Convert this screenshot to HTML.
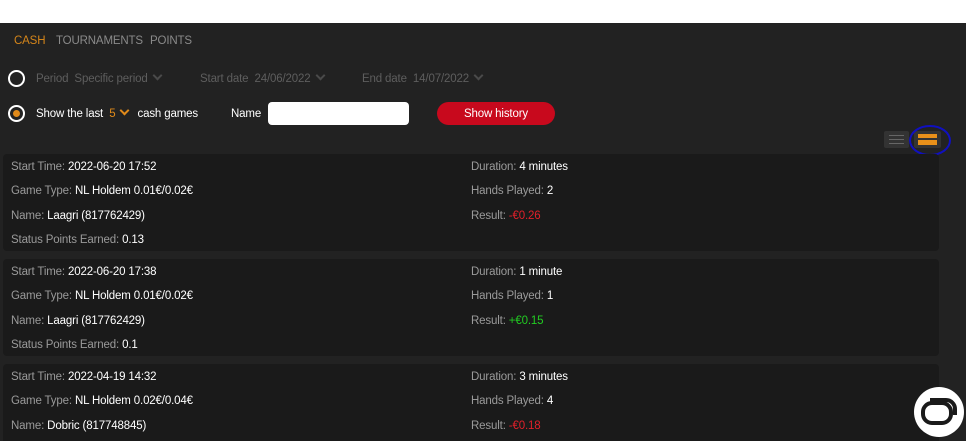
<!DOCTYPE html>
<html><head><meta charset="utf-8"><style>
*{margin:0;padding:0;box-sizing:border-box}
html,body{width:975px;height:441px;overflow:hidden}
body{background:#fff;position:relative;font-family:"Liberation Sans",sans-serif;font-size:11.5px;letter-spacing:-0.15px}
#app{position:absolute;left:0;top:23px;width:966px;height:418px;background:#222;overflow:hidden}
.a{position:absolute;white-space:nowrap}
.dim{color:#5e5e5e}
.w{color:#fff}
.g{color:#9a9a9a}
.radio{position:absolute;width:17px;height:17px;border:2px solid #fff;border-radius:50%}
.chev{display:inline-block;width:7px;height:7px;border-right:2px solid #4a4a4a;border-bottom:2px solid #4a4a4a;transform:rotate(45deg);margin-left:6px;position:relative;top:-3px}
.card{position:absolute;left:3px;width:936px;height:97px;background:#1a1a1a;border-radius:4px}
.card .a{color:#9a9a9a}
.card b{font-weight:normal;color:#fff}
</style></head><body>
<div id="app">
<div class="a" style="left:14px;top:12px;color:#d4851a">CASH</div>
<div class="a g" style="left:56px;top:12px;color:#8a8a8a">TOURNAMENTS</div>
<div class="a g" style="left:150px;top:12px;color:#8a8a8a">POINTS</div>

<div class="radio" style="left:8px;top:47px"></div>
<div class="a dim" style="left:36px;top:50px">Period&nbsp; Specific period<span class="chev"></span></div>
<div class="a dim" style="left:200px;top:50px">Start date&nbsp; 24/06/2022<span class="chev"></span></div>
<div class="a dim" style="left:362px;top:50px">End date&nbsp; 14/07/2022<span class="chev"></span></div>

<div class="radio" style="left:8px;top:82px"></div>
<div style="position:absolute;left:13px;top:87px;width:7px;height:7px;border-radius:50%;background:#e08a1a"></div>
<div class="a w" style="left:36px;top:85px">Show the last&nbsp; <span style="color:#e08a1a">5</span><span class="chev" style="border-color:#e08a1a;margin-right:6px"></span> cash games</div>
<div class="a w" style="left:231px;top:85px">Name</div>
<div style="position:absolute;left:268px;top:79px;width:141px;height:23px;background:#fff;border-radius:4px"></div>
<div style="position:absolute;left:437px;top:79px;width:118px;height:23px;background:#c8091d;border-radius:12px;color:#fff;text-align:center;line-height:24px">Show history</div>

<div style="position:absolute;left:884px;top:108px;width:25px;height:17px;background:#333;border-radius:2px"></div>
<div style="position:absolute;left:889px;top:112px;width:15px;height:9px;border-top:1px solid #666;border-bottom:1px solid #666"><div style="margin-top:3px;height:1px;background:#666"></div></div>
<div style="position:absolute;left:914px;top:108px;width:27px;height:17px;background:#333;border-radius:2px"></div>
<div style="position:absolute;left:918px;top:111px;width:19px;height:4px;background:#e8901a"></div>
<div style="position:absolute;left:918px;top:117px;width:19px;height:5px;background:#e8901a"></div>
<div style="position:absolute;left:909px;top:102px;width:42px;height:31px;border:2px solid #1010c0;border-radius:50%"></div>

<div class="card" style="top:131px">
<div class="a" style="left:8px;top:7px">Start Time: <b>2022-06-20 17:52</b></div>
<div class="a" style="left:8px;top:31px">Game Type: <b>NL Holdem 0.01€/0.02€</b></div>
<div class="a" style="left:8px;top:56px">Name: <b>Laagri (817762429)</b></div>
<div class="a" style="left:8px;top:80px">Status Points Earned: <b>0.13</b></div>
<div class="a" style="left:468px;top:7px">Duration: <b>4 minutes</b></div>
<div class="a" style="left:468px;top:31px">Hands Played: <b>2</b></div>
<div class="a" style="left:468px;top:56px">Result: <span style="color:#e0202a">-€0.26</span></div>
</div>
<div class="card" style="top:236px">
<div class="a" style="left:8px;top:7px">Start Time: <b>2022-06-20 17:38</b></div>
<div class="a" style="left:8px;top:31px">Game Type: <b>NL Holdem 0.01€/0.02€</b></div>
<div class="a" style="left:8px;top:56px">Name: <b>Laagri (817762429)</b></div>
<div class="a" style="left:8px;top:80px">Status Points Earned: <b>0.1</b></div>
<div class="a" style="left:468px;top:7px">Duration: <b>1 minute</b></div>
<div class="a" style="left:468px;top:31px">Hands Played: <b>1</b></div>
<div class="a" style="left:468px;top:56px">Result: <span style="color:#22cc22">+€0.15</span></div>
</div>
<div class="card" style="top:341px">
<div class="a" style="left:8px;top:7px">Start Time: <b>2022-04-19 14:32</b></div>
<div class="a" style="left:8px;top:31px">Game Type: <b>NL Holdem 0.02€/0.04€</b></div>
<div class="a" style="left:8px;top:56px">Name: <b>Dobric (817748845)</b></div>
<div class="a" style="left:468px;top:7px">Duration: <b>3 minutes</b></div>
<div class="a" style="left:468px;top:31px">Hands Played: <b>4</b></div>
<div class="a" style="left:468px;top:56px">Result: <span style="color:#e0202a">-€0.18</span></div>
</div>

<svg style="position:absolute;left:913px;top:363px" width="52" height="52" viewBox="0 0 52 52">
<circle cx="26" cy="26" r="25" fill="#fff"/>
<rect x="10" y="17" width="28" height="20" rx="9" fill="none" stroke="#1a1a1a" stroke-width="4"/>
<path d="M17 14 h16 a9 9 0 0 1 9 9 v6" fill="none" stroke="#1a1a1a" stroke-width="4"/>
</svg>
</div>
</body></html>
